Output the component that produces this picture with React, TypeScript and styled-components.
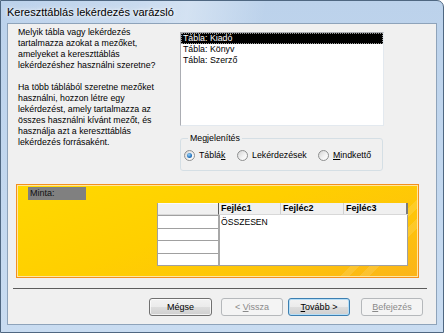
import styled, { createGlobalStyle } from 'styled-components'

const GlobalStyle = createGlobalStyle`
  html, body {
    margin: 0;
    padding: 0;
    background: #ffffff;
  }
  body {
    font-family: 'Liberation Sans', Arial, sans-serif;
    color: #000;
  }
`

const Window = styled.div`
  width: 444px;
  height: 333px;
  box-sizing: border-box;
  display: flex;
  flex-direction: column;
  border: 1px solid #4f6781;
  border-top-right-radius: 7px;
  padding: 0 6px 7px;
  background: linear-gradient(to bottom, #bcd2eb 0%, #c3d8ef 60%, #c9dcf1 100%);
  overflow: hidden;
`

const TitleBar = styled.div`
  height: 22px;
  display: flex;
  align-items: center;
  font-size: 11px;
  color: #000;
  text-shadow: 0 0 6px #fff, 0 0 3px rgba(255, 255, 255, 0.9);
  background: linear-gradient(
    100deg,
    rgba(255, 255, 255, 0) 0%,
    rgba(255, 255, 255, 0.18) 30%,
    rgba(255, 255, 255, 0.35) 42%,
    rgba(255, 255, 255, 0) 60%
  );
`

const Client = styled.div`
  flex: 1;
  display: flex;
  flex-direction: column;
  border: 1px solid #8ea3ba;
  background: #f0f0f0;
  font-size: 8.8px;
  line-height: 11px;
`

const TopRow = styled.div`
  display: grid;
  grid-template-columns: 162px 204px;
  padding: 3px 0 0 10px;
`

const Prompt = styled.div`
  p {
    margin: 0;
  }
  p + p {
    margin-top: 11px;
  }
`

const RightCol = styled.div`
  display: flex;
  flex-direction: column;
  padding-top: 5px;
`

const ListBox = styled.div`
  height: 94px;
  box-sizing: border-box;
  background: #fff;
  border: 1px solid;
  border-color: #abadb3 #e3e9ef #e3e9ef #abadb3;
`

const ListItem = styled.div<{ $selected?: boolean }>`
  height: 11px;
  line-height: 11px;
  padding-left: 2px;
  box-sizing: border-box;
  background: ${p => (p.$selected ? '#000' : 'transparent')};
  color: ${p => (p.$selected ? '#fff' : '#000')};
  outline: ${p => (p.$selected ? '1px dotted #9a9a9a' : 'none')};
  outline-offset: -1px;
`

const GroupBox = styled.fieldset`
  width: 203px;
  box-sizing: border-box;
  margin: 7px 0 0;
  padding: 5px 0 9px 3px;
  border: 1px solid #d5dfe5;
  border-radius: 3px;
  min-width: 0;
`

const Legend = styled.legend`
  padding: 0 2px;
  margin-left: 4px;
  line-height: 11px;
`

const RadioRow = styled.div`
  display: flex;
  align-items: center;
  height: 12px;
`

const RadioOption = styled.label<{ $w?: number }>`
  display: flex;
  align-items: center;
  gap: 4px;
  width: ${p => (p.$w ? `${p.$w}px` : 'auto')};
  flex: none;
`

const RadioDot = styled.span<{ $checked?: boolean }>`
  width: 11px;
  height: 11px;
  box-sizing: border-box;
  border-radius: 50%;
  border: 1px solid #8e8f8f;
  display: flex;
  align-items: center;
  justify-content: center;
  background: linear-gradient(135deg, #d5d5d5 0%, #f4f4f4 60%, #ffffff 100%);

  &::after {
    content: '';
    display: ${p => (p.$checked ? 'block' : 'none')};
    width: 5px;
    height: 5px;
    border-radius: 50%;
    background: radial-gradient(circle at 40% 35%, #9fd3f7 0%, #2b7bc4 55%, #164e8c 100%);
  }
`

const Key = styled.span`
  text-decoration: underline;
`

const Panel = styled.div`
  margin: 13px 0 0 8px;
  width: 403px;
  height: 94px;
  box-sizing: border-box;
  border: 1px solid #f4901e;
  box-shadow: inset 0 0 0 1px #ffe6a0;
  background:
    linear-gradient(135deg, transparent 0 84%, rgba(255, 255, 255, 0.12) 84% 86%, transparent 86% 88%, rgba(255, 255, 255, 0.12) 88% 90%, transparent 90%),
    linear-gradient(160deg, #ffd900 0%, #ffcf00 45%, #fec40a 75%, #fbb41a 100%);
  display: flex;
  flex-direction: column;
`

const SampleLabel = styled.div`
  margin: 2px 0 0 11px;
  width: 58px;
  height: 13px;
  box-sizing: border-box;
  padding-left: 2px;
  line-height: 13px;
  background: #808080;
  color: #111;
  font-size: 9px;
`

const Grid = styled.div`
  margin: 3px 0 0 140px;
  width: 251px;
  height: 63px;
  display: flex;
`

const RowHeaders = styled.div`
  width: 61px;
  display: flex;
  flex-direction: column;
  box-sizing: border-box;
  border-left: 1px solid #a0a0a0;
  border-bottom: 1px solid #a0a0a0;
`

const CornerCell = styled.div`
  height: 12px;
  flex: none;
  box-sizing: border-box;
  background: #f0f0f0;
  border-top: 1px solid #fafafa;
  border-bottom: 1px solid #d8d8d8;
`

const RowCell = styled.div`
  flex: 1;
  background: #fff;
  border-top: 1px solid #a0a0a0;
`

const DataCol = styled.div`
  flex: 1;
  display: flex;
  flex-direction: column;
`

const HeadRow = styled.div`
  height: 12px;
  flex: none;
  display: flex;
  background: #f0f0f0;
  border-left: 1px solid #5a5a5a;
  box-sizing: border-box;
  border-bottom: 1px solid #d8d8d8;
`

const HeadCell = styled.div<{ $w: number; $last?: boolean }>`
  width: ${p => p.$w}px;
  box-sizing: border-box;
  padding-left: 2px;
  font-weight: bold;
  font-size: 9px;
  line-height: 11px;
  border-right: ${p => (p.$last ? '2px solid #7a7a7a' : '1px solid #d0d0d0')};
`

const DataBody = styled.div`
  flex: 1;
  background: #fff;
  border-left: 2px solid #a8a8a8;
  border-right: 1px solid #a0a0a0;
  border-bottom: 1px solid #a0a0a0;
  padding: 2px 1px;
  font-size: 8.6px;
  line-height: 10px;
`

const Divider = styled.div`
  height: 1px;
  margin: 10px 9px 0 5px;
  background: #5c5c5c;
`

const ButtonRow = styled.div`
  display: flex;
  justify-content: flex-end;
  gap: 5px;
  margin-top: 9px;
  padding-right: 13px;
`

const Button = styled.button<{ $kind?: 'normal' | 'default' | 'disabled'; $w?: number; $before?: number }>`
  width: ${p => p.$w ?? 62}px;
  height: 18px;
  margin: 0 0 0 ${p => p.$before ?? 0}px;
  padding: 0;
  font-family: 'Liberation Sans', Arial, sans-serif;
  font-size: 9px;
  border-radius: 3px;
  color: ${p => (p.$kind === 'disabled' ? '#8a8a8a' : '#000')};
  border: 1px solid
    ${p => (p.$kind === 'disabled' ? '#b5b8bb' : p.$kind === 'default' ? '#3c7fb1' : '#707070')};
  background: ${p =>
    p.$kind === 'disabled'
      ? '#f4f4f4'
      : 'linear-gradient(to bottom, #f2f2f2 0%, #ebebeb 50%, #dddddd 51%, #cfcfcf 100%)'};
  box-shadow: ${p =>
    p.$kind === 'default'
      ? 'inset 0 0 0 1px #b6def7'
      : p.$kind === 'disabled'
      ? 'none'
      : 'inset 0 0 0 1px rgba(255,255,255,0.7)'};
`

export default function App() {
  return (
    <>
      <GlobalStyle />
      <Window>
        <TitleBar>Kereszttáblás lekérdezés varázsló</TitleBar>
        <Client>
          <TopRow>
            <Prompt>
              <p>
                Melyik tábla vagy lekérdezés
                <br />
                tartalmazza azokat a mezőket,
                <br />
                amelyeket a kereszttáblás
                <br />
                lekérdezéshez használni szeretne?
              </p>
              <p>
                Ha több táblából szeretne mezőket
                <br />
                használni, hozzon létre egy
                <br />
                lekérdezést, amely tartalmazza az
                <br />
                összes használni kívánt mezőt, és
                <br />
                használja azt a kereszttáblás
                <br />
                lekérdezés forrásaként.
              </p>
            </Prompt>
            <RightCol>
              <ListBox>
                <ListItem $selected>Tábla: Kiadó</ListItem>
                <ListItem>Tábla: Könyv</ListItem>
                <ListItem>Tábla: Szerző</ListItem>
              </ListBox>
              <GroupBox>
                <Legend>Megjelenítés</Legend>
                <RadioRow>
                  <RadioOption $w={53}>
                    <RadioDot $checked />
                    <span>
                      Táblá<Key>k</Key>
                    </span>
                  </RadioOption>
                  <RadioOption $w={81}>
                    <RadioDot />
                    <span>Lekérdezések</span>
                  </RadioOption>
                  <RadioOption>
                    <RadioDot />
                    <span>
                      <Key>M</Key>indkettő
                    </span>
                  </RadioOption>
                </RadioRow>
              </GroupBox>
            </RightCol>
          </TopRow>

          <Panel>
            <SampleLabel>Minta:</SampleLabel>
            <Grid>
              <RowHeaders>
                <CornerCell />
                <RowCell />
                <RowCell />
                <RowCell />
                <RowCell />
              </RowHeaders>
              <DataCol>
                <HeadRow>
                  <HeadCell $w={62}>Fejléc1</HeadCell>
                  <HeadCell $w={63}>Fejléc2</HeadCell>
                  <HeadCell $w={64} $last>
                    Fejléc3
                  </HeadCell>
                </HeadRow>
                <DataBody>ÖSSZESEN</DataBody>
              </DataCol>
            </Grid>
          </Panel>

          <Divider />

          <ButtonRow>
            <Button $w={63}>Mégse</Button>
            <Button $kind="disabled" $before={4}>
              &lt; <Key>V</Key>issza
            </Button>
            <Button $kind="default">
              <Key>T</Key>ovább &gt;
            </Button>
            <Button $kind="disabled" $before={6}>
              <Key>B</Key>efejezés
            </Button>
          </ButtonRow>
        </Client>
      </Window>
    </>
  )
}
